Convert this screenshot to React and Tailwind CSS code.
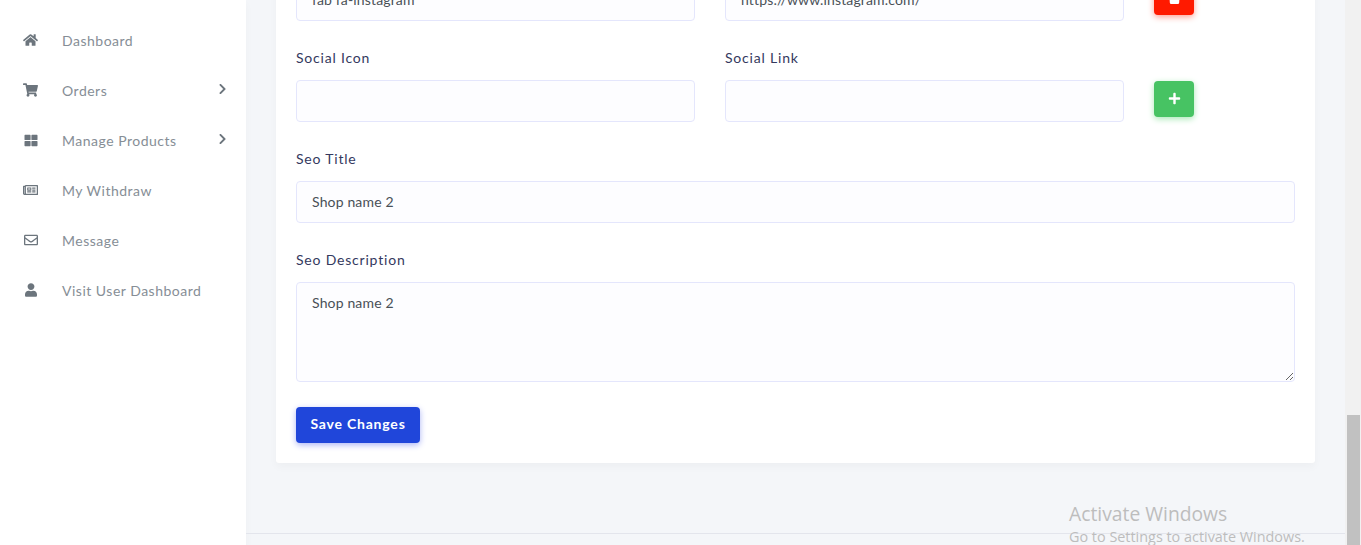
import { FaHome, FaShoppingCart, FaThLarge, FaRegNewspaper, FaRegEnvelope, FaUser, FaChevronRight, FaTrash, FaPlus } from "react-icons/fa";

const navItems = [
  { label: "Dashboard", icon: FaHome, size: "w-[15px] h-[14px]" },
  { label: "Orders", icon: FaShoppingCart, size: "w-[15px] h-[14px]", arrow: true },
  { label: "Manage Products", icon: FaThLarge, size: "w-[14px] h-[13px] ml-[1px]", arrow: true },
  { label: "My Withdraw", icon: FaRegNewspaper, size: "w-[15px] h-[14px]" },
  { label: "Message", icon: FaRegEnvelope, size: "w-[14px] h-[14px] ml-[1px]" },
  { label: "Visit User Dashboard", icon: FaUser, size: "w-[12px] h-[14px] ml-[2px]" },
];

const inputClass =
  "block w-full h-[42px] px-[15px] pb-[2px] rounded-[4px] border border-[#e4e6fc] bg-[#fdfdff] text-[14px] text-[#495057] tracking-[0.15px] outline-none";

const Field = ({ label, value }) => (
  <div className="mb-[26px]">
    {label && <label className="block h-[22px] mb-[11px] text-[14px] leading-[22px] tracking-[0.8px] text-[#34395e]">{label}</label>}
    <input className={inputClass} defaultValue={value} />
  </div>
);

const Sidebar = () => (
  <aside className="w-[246px] shrink-0 bg-white pt-4 shadow-[0_4px_8px_rgba(0,0,0,0.03)]">
    {navItems.map((item) => {
      const Icon = item.icon;
      return (
        <div key={item.label} className="flex items-center h-[50px] pl-[23px] pb-[2px] text-[14px] tracking-[0.5px] text-[#868e96]">
          <span className="w-[39px] shrink-0 text-[#6c757d]">
            <Icon className={item.size} />
          </span>
          <span>{item.label}</span>
          {item.arrow && <FaChevronRight className="absolute left-[218px] -mt-[2px] w-[9px] h-[12px] text-[#6c757d]" />}
        </div>
      );
    })}
  </aside>
);

export default function App() {
  return (
    <div className="relative flex h-[545px] overflow-hidden bg-[#f4f6f9] font-['Lato','Noto_Sans',sans-serif]">
      <Sidebar />

      <main className="flex flex-col flex-1 min-w-0">
        <div className="flex-1 px-[30px]">
          <section className="w-[1039px] -mt-[21px] px-5 pb-5 bg-white rounded-b-[3px] shadow-[0_4px_8px_rgba(0,0,0,0.03)]">
            <div className="flex gap-[30px]">
              <div className="w-[399px]"><Field value="fab fa-instagram" /></div>
              <div className="w-[399px]"><Field value="https://www.instagram.com/" /></div>
              <button className="flex items-center justify-center w-10 h-9 rounded-[4px] bg-[#ff1a00] text-white shadow-[0_2px_6px_#ff9d92]">
                <FaTrash className="w-[13px] h-[14px]" />
              </button>
            </div>
            <div className="flex gap-[30px]">
              <div className="w-[399px]"><Field label="Social Icon" /></div>
              <div className="w-[399px]"><Field label="Social Link" /></div>
              <button className="flex items-center justify-center w-10 h-9 mt-[34px] rounded-[4px] bg-[#47c363] text-white shadow-[0_2px_6px_#a8e8b5]">
                <FaPlus className="w-[13px] h-[13px] -mt-[1px]" />
              </button>
            </div>
            <Field label="Seo Title" value="Shop name 2" />
            <div className="mb-[25px]">
              <label className="block h-[22px] mb-[11px] text-[14px] leading-[22px] tracking-[0.8px] text-[#34395e]">Seo Description</label>
              <textarea
                className="block w-full h-[100px] px-[15px] pt-[9px] pb-[10px] rounded-[4px] border border-[#e4e6fc] bg-[#fdfdff] text-[14px] text-[#495057] tracking-[0.15px] outline-none"
                defaultValue="Shop name 2"
              />
            </div>
            <button className="block w-[124px] h-9 pb-1 rounded-[4px] bg-[#2046da] text-[14px] font-bold tracking-[0.8px] text-white shadow-[0_2px_6px_#acb5f6]">
              Save Changes
            </button>
          </section>
        </div>
        <div className="h-3 border-t border-[#e3e5ec]" />
      </main>

      {/* browser scrollbar */}
      <div className="flex flex-col justify-end w-[16px] shrink-0 pl-[2px] pr-[1px] bg-[#f1f1f1]">
        <div className="h-[130px] bg-[#c1c1c1]" />
      </div>

      {/* windows watermark sits over the page */}
      <div className="absolute left-[1069px] top-[501px] text-[#bdbdbd] font-['Open_Sans',sans-serif] pointer-events-none">
        <div className="text-[19.3px] leading-[26px]">Activate Windows</div>
        <div className="text-[14.4px] leading-[20px]">Go to Settings to activate Windows.</div>
      </div>
    </div>
  );
}
